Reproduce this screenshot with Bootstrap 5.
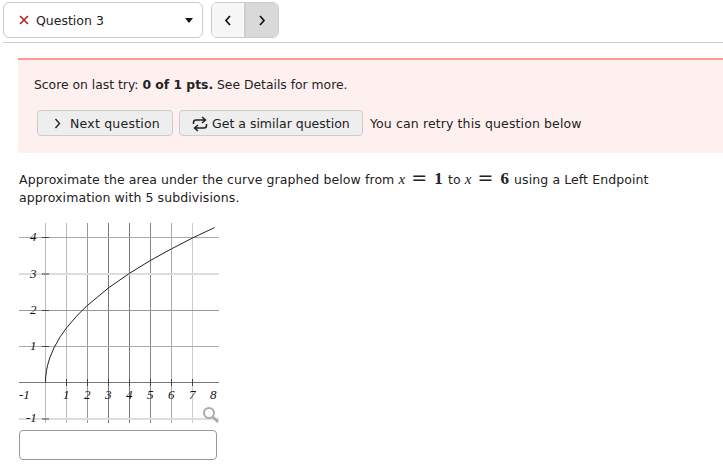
<!DOCTYPE html>
<html lang="en">
<head>
<meta charset="utf-8">
<title>Question 3</title>
<link href="https://cdn.jsdelivr.net/npm/bootstrap@5.3.0/dist/css/bootstrap.min.css" rel="stylesheet">
<style>
html,body{height:474px;overflow:hidden}
body{font-family:"DejaVu Sans",sans-serif;font-size:12px;line-height:18px;color:#222;background:#fff}
.pagewrap{padding:2px 0 0 3px}
.topbar{gap:8px;padding-bottom:4px;border-bottom:1px solid #ccc}
.qselect{width:200px;height:36px;background:#fff;border:1px solid #ccc;border-radius:6px;padding:2px 9px 0 15px;font-size:12.5px;color:#222}
.qselect svg{margin-right:7px;margin-top:-2px}
.qselect .caret{width:0;height:0;border-left:4px solid transparent;border-right:4px solid transparent;border-top:5px solid #111;margin-top:-2px}
.pager{height:36px;border:1px solid #ccc;border-radius:6px;overflow:hidden}
.pgbtn{width:32px;background:#f6f6f6;display:flex;align-items:center;justify-content:center}
.pgbtn.active-page{width:34px;background:#d9d9d9;border-left:2px solid #ccc}
.scorebox{margin:15px 0 0 15px;background:#fff0f0;border-top:2px solid #f99;height:95px;padding:16px 16px 0 16px}
.scoreline{margin:0 0 16px;height:18px;font-size:12.35px}
.scoreline b{font-weight:700}
.act{height:26px;background:#eee;border:1px solid #ccc;border-radius:4px;color:#222;display:flex;align-items:center;font-size:12.5px;padding-top:1px}
.act-next{width:136px;padding-left:16px;margin-left:3px;gap:9px;letter-spacing:.22px}
.act-sim{width:184px;padding-left:12px;margin-left:6px;gap:4px}
.retry{margin-left:7px;font-size:12.5px;letter-spacing:.12px;padding-top:1px}
.qtext{margin:17px 0 0 16px;padding-top:1px;height:37px;width:660px;font-size:12.5px;letter-spacing:.09px;line-height:17.5px}
.qtext span{line-height:0}
.qtext .mv{font-family:"Liberation Serif",serif;font-style:italic;font-size:15px;margin:0 1px 0 0}
.qtext .mn{font-family:"Liberation Serif",serif;font-size:17px;font-weight:700;margin:0 1px}
.qtext .me{font-family:"DejaVu Sans",sans-serif;font-size:19px;margin:0 6px 0 5px}
.graphbox{display:block;margin:16px 0 0 16px;overflow:visible}
.graphbox text{font-family:"Liberation Serif",serif;font-style:italic;font-size:13px;fill:#111}
.answer{width:198px;height:30px;margin:7px 0 0 16px;border:1px solid #999;border-radius:4px;background:#fff;display:block}
</style>
</head>
<body>
<div class="pagewrap">
  <div class="topbar d-flex">
    <div class="qselect d-flex align-items-center">
      <svg width="10" height="10" viewBox="0 0 10 10" class="flex-shrink-0"><path d="M1 1 9 9M9 1 1 9" stroke="#b02020" stroke-width="1.6" fill="none"/></svg>
      <span>Question 3</span>
      <span class="caret ms-auto"></span>
    </div>
    <div class="pager d-flex">
      <div class="pgbtn"><svg width="8" height="11" viewBox="0 0 8 11"><path d="M6 1 2 5.5 6 10" stroke="#111" stroke-width="1.7" fill="none"/></svg></div>
      <div class="pgbtn active-page"><svg width="8" height="11" viewBox="0 0 8 11"><path d="M2 1 6 5.5 2 10" stroke="#111" stroke-width="1.7" fill="none"/></svg></div>
    </div>
  </div>
  <div class="scorebox">
    <p class="scoreline">Score on last try: <b>0 of 1 pts.</b> See Details for more.</p>
    <div class="d-flex align-items-center">
      <div class="act act-next"><svg width="7" height="11" viewBox="0 0 7 11"><path d="M1.5 1 5.5 5.5 1.5 10" stroke="#222" stroke-width="1.4" fill="none"/></svg><span>Next question</span></div>
      <div class="act act-sim"><svg width="16" height="16" viewBox="0 0 16 16"><path d="M1.5 8V6.5Q1.5 4 4 4H13M10 1 13.5 4 10 7M14.5 8V9.5Q14.5 12 12 12H3M6 9 2.5 12 6 15" stroke="#222" stroke-width="1.5" fill="none"/></svg><span>Get a similar question</span></div>
      <span class="retry">You can retry this question below</span>
    </div>
  </div>
  <p class="qtext mb-0">Approximate the area under the curve graphed below from <span class="mv">x</span><span class="me">=</span><span class="mn">1</span> to <span class="mv">x</span><span class="me">=</span><span class="mn">6</span> using a Left Endpoint approximation with 5 subdivisions.</p>
  <svg class="graphbox" width="200" height="200" viewBox="0 0 200 200">
    <g fill="none" stroke-width="1">
      <path d="M26.5 0V200" stroke="#bbb"/>
      <path d="M47.5 0V200" stroke="#bbb"/>
      <path d="M68.5 0V200" stroke="#999"/>
      <path d="M89.5 0V200" stroke="#777"/>
      <path d="M110.5 0V200" stroke="#777"/>
      <path d="M131.5 0V200" stroke="#888"/>
      <path d="M152.5 0V200" stroke="#aaa"/>
      <path d="M173.5 0V200" stroke="#ccc"/>
      <path d="M0 14.5H200" stroke="#aaa"/>
      <path d="M0 51H200" stroke="#ddd" stroke-width="2"/>
      <path d="M0 87.5H200" stroke="#999"/>
      <path d="M0 123.5H200" stroke="#aaa"/>
      <path d="M0 159.5H200" stroke="#777"/>
      <path d="M0 196H200" stroke="#ddd" stroke-width="2"/>
      <path d="M47.5 156V163M68.5 156V163M89.5 156V163M110.5 156V163M131.5 156V163M152.5 156V163M173.5 156V163M23 14.5H30M23 51H30M23 87.5H30M23 123.5H30M23 196H30" stroke="#444"/>
      <polyline stroke="#222" points="26.5,159.5 26.7,154 27.55,147.3 28.6,142.2 30.7,135.1 34.9,125 41.2,113.8 47.5,104.9 58,92.6 68.5,82.3 89.5,64.9 110.5,50.3 131.5,37.4 152.5,25.8 173.5,15 195.5,4.6"/>
    </g>
    <text x="11" y="18">4</text><text x="11" y="55">3</text><text x="11" y="91">2</text><text x="11" y="127">1</text>
    <text x="0" y="176">-1</text><text x="44" y="176">1</text><text x="65" y="176">2</text><text x="86" y="176">3</text><text x="107" y="176">4</text><text x="128" y="176">5</text><text x="149" y="176">6</text><text x="170" y="176">7</text><text x="191" y="176">8</text>
    <text x="7" y="199">-1</text>
    <g fill="none" stroke="#aaa"><circle cx="190" cy="190" r="5" stroke-width="2"/><path d="M194 194 199 199" stroke-width="2.5"/></g>
  </svg>
  <div class="answer"></div>
</div>
</body>
</html>
